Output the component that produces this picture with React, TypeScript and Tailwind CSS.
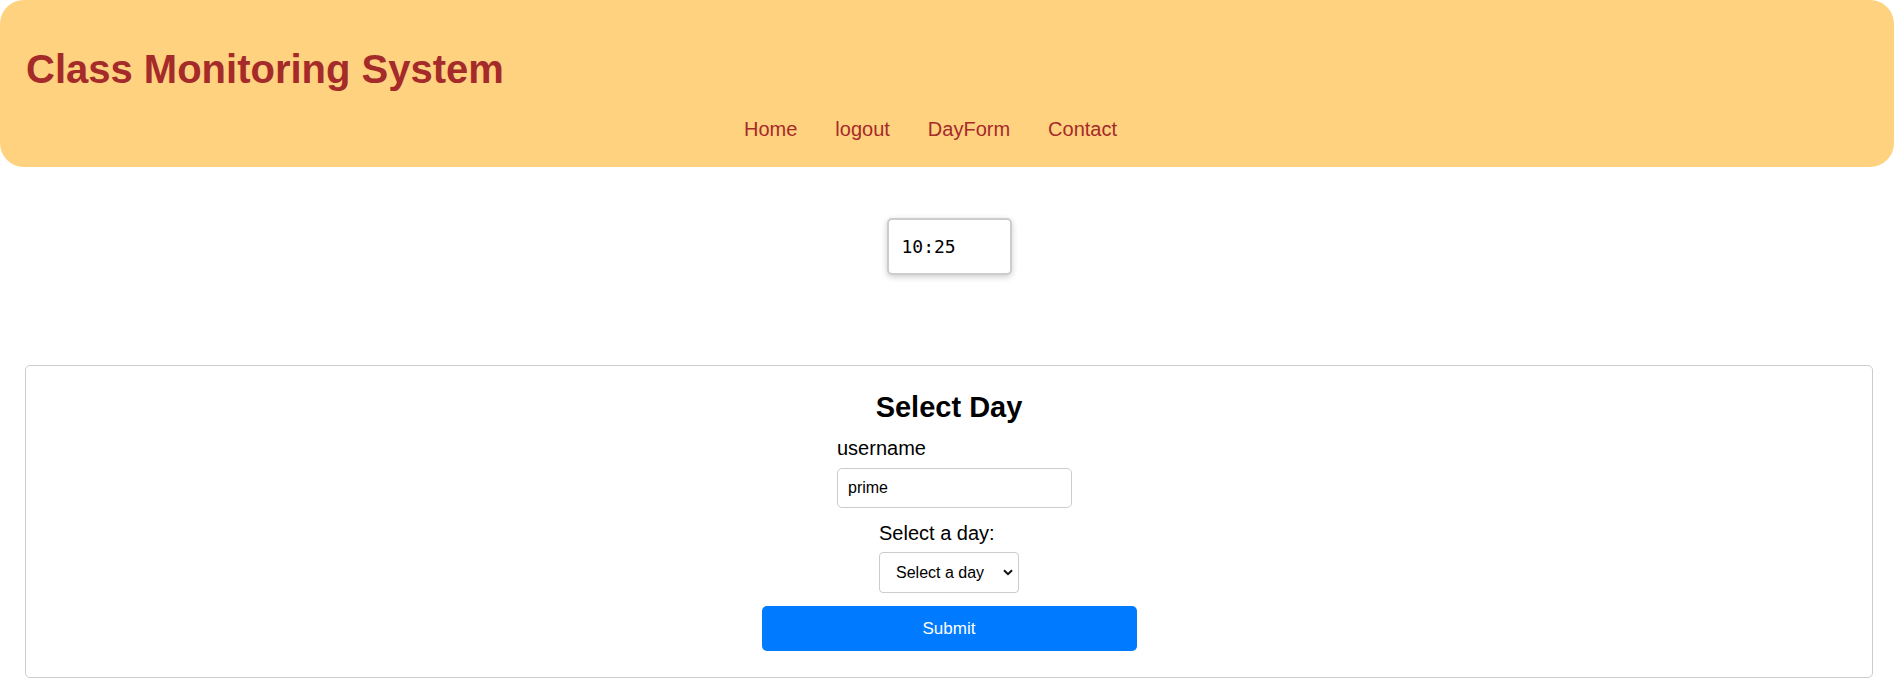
import { useState } from 'react'

const links = ['Home', 'logout', 'DayForm', 'Contact']

function Header() {
  return (
    <header className="h-[167px] rounded-[24px] bg-[#ffd280] pt-[46px]">
      <h1 className="pl-[26px] text-[40px] font-bold leading-[46px] text-[#a52a2a]">
        Class Monitoring System
      </h1>
      <nav className="mt-[26px] flex justify-center gap-[38px] pr-[33px]">
        {links.map((l) => (
          <a key={l} href="#" className="text-[20px] leading-[23px] text-[#a52a2a]">
            {l}
          </a>
        ))}
      </nav>
    </header>
  )
}

function Clock() {
  return (
    <div className="mx-auto mt-[51px] flex h-[57px] w-[125px] items-center rounded-[5px] border-2 border-[#cccccc] bg-white pl-[13px] shadow-[0_2px_6px_rgba(0,0,0,0.2)]">
      <span className="font-['DejaVu_Sans_Mono',monospace] text-[18px] text-black">10:25</span>
    </div>
  )
}

function DayForm() {
  const [name, setName] = useState('prime')
  const [day, setDay] = useState('')

  return (
    <form
      onSubmit={(e) => e.preventDefault()}
      className="mt-[90px] flex flex-col items-center rounded-[5px] border border-[#cccccc] pt-[24px] pb-[26px]"
    >
      <h2 className="text-[29px] font-bold leading-[34px] text-black">Select Day</h2>

      <div className="ml-[11px] mt-[13px] flex w-[235px] flex-col items-start">
        <label className="text-[20px] leading-[23px] text-black">username</label>
        <input
          value={name}
          onChange={(e) => setName(e.target.value)}
          className="mt-[8px] h-[40px] w-[235px] rounded-[5px] border border-[#cccccc] px-[10px] text-[16px] text-black outline-none"
        />
      </div>

      <div className="mt-[14px] flex w-[140px] flex-col items-start">
        <label className="text-[20px] leading-[23px] text-black">Select a day:</label>
        <div className="relative mt-[7px]">
          <select
            value={day}
            onChange={(e) => setDay(e.target.value)}
            className="h-[41px] w-[140px] appearance-none rounded-[4px] border border-[#cccccc] bg-white pl-[16px] text-[16px] text-black outline-none"
          >
            <option value="">Select a day</option>
            <option>Monday</option>
            <option>Tuesday</option>
            <option>Wednesday</option>
            <option>Thursday</option>
            <option>Friday</option>
          </select>
          <svg
            className="pointer-events-none absolute right-[6px] top-[17px]"
            width="10"
            height="7"
            viewBox="0 0 10 7"
            fill="none"
          >
            <path d="M1 1.2l4 4 4-4" stroke="#111" strokeWidth="2" />
          </svg>
        </div>
      </div>

      <button
        type="submit"
        className="mt-[13px] h-[45px] w-[375px] rounded-[5px] bg-[#007bff] text-[17px] text-white"
      >
        Submit
      </button>
    </form>
  )
}

export default function App() {
  return (
    <div className="min-h-screen bg-white font-['Liberation_Sans',Arial,sans-serif]">
      <Header />
      <main className="ml-[25px] mr-[21px]">
        <Clock />
        <DayForm />
      </main>
    </div>
  )
}
